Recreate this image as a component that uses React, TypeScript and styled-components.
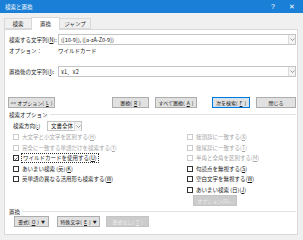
import styled, { createGlobalStyle } from "styled-components";

const GlobalStyle = createGlobalStyle`
  html, body { margin:0; padding:0; }
  body {
    width:303px;
    height:240px;
    overflow:hidden;
    background:#f0f0f0;
    font-family:"Noto Sans CJK JP","Noto Sans",sans-serif;
    font-size:5.5px;
    color:#1a1a1a;
  }
  u { text-decoration:underline; text-underline-offset:1px; text-decoration-thickness:0.5px; }
`;

const Window = styled.div`
  width:303px;
  height:240px;
  display:flex;
  flex-direction:column;
  background:#f0f0f0;
`;

const TitleBar = styled.div`
  height:13px;
  background:#1a7fd6;
  color:#fff;
  display:flex;
  align-items:center;
  padding:0 8px 0 5px;
  font-size:5.5px;
`;

const Title = styled.span`
  flex:1;
`;

const TitleIcon = styled.span`
  font-family:"Liberation Sans",sans-serif;
  font-size:7px;
  margin-left:14px;
`;

const Tabs = styled.div`
  display:flex;
  align-items:flex-end;
  height:13px;
  margin:3px 0 0 5px;
  position:relative;
  z-index:1;
`;

const Tab = styled.div<{ $active?: boolean; $w: number }>`
  width:${p => p.$w}px;
  height:${p => (p.$active ? 13 : 11)}px;
  box-sizing:border-box;
  display:flex;
  align-items:center;
  justify-content:center;
  border:1px solid #d9d9d9;
  border-bottom:${p => (p.$active ? "none" : "1px solid #d9d9d9")};
  background:${p => (p.$active ? "#fff" : "#f0f0f0")};
  margin-bottom:${p => (p.$active ? "-1px" : "0")};
  margin-left:-1px;
`;

const Panel = styled.div`
  margin-left:4px;
  width:294px;
  height:206px;
  box-sizing:border-box;
  border:1px solid #d9d9d9;
  background:#fff;
  padding:3px 1px 0 4px;
  display:flex;
  flex-direction:column;
`;

const FieldRow = styled.div<{ $mt: number }>`
  display:grid;
  grid-template-columns:49px 1fr;
  align-items:center;
  margin-top:${p => p.$mt}px;
`;

const ComboBox = styled.div`
  height:11px;
  box-sizing:border-box;
  border:1px solid #c4c4c4;
  display:flex;
  align-items:center;
  padding-left:2px;
  background:#fff;
`;

const ComboText = styled.span`
  flex:1;
  white-space:nowrap;
`;

const ArrowBox = styled.span`
  width:7px;
  height:9px;
  box-sizing:border-box;
  border-left:1px solid #dcdcdc;
  background:#f3f3f3;
  display:flex;
  align-items:center;
  justify-content:center;
`;

const InfoRow = styled.div`
  display:grid;
  grid-template-columns:49px 1fr;
  height:7px;
  align-items:center;
  margin-top:2px;
`;

const ButtonRow = styled.div<{ $mt: number; $ml?: number }>`
  display:flex;
  margin-top:${p => p.$mt}px;
  margin-left:${p => p.$ml ?? 0}px;
`;

const Button = styled.div<{ $w: number; $ml?: number; $focus?: boolean; $disabled?: boolean }>`
  width:${p => p.$w}px;
  height:11px;
  box-sizing:border-box;
  margin-left:${p => p.$ml ?? 0}px;
  display:flex;
  align-items:center;
  justify-content:center;
  gap:2px;
  white-space:nowrap;
  font-size:5px;
  background:${p => (p.$disabled ? "#cccccc" : "#e1e1e1")};
  border:1px solid ${p => (p.$focus ? "#0078d7" : p.$disabled ? "#c4c4c4" : "#adadad")};
  box-shadow:${p => (p.$focus ? "inset 0 0 0 1px #cce4f7" : "none")};
  color:${p => (p.$disabled ? "#efefef" : "#1a1a1a")};
`;

const GroupHeader = styled.div<{ $mt: number }>`
  display:flex;
  align-items:center;
  height:7px;
  margin-top:${p => p.$mt}px;
  &::after {
    content:"";
    flex:1;
    height:1px;
    background:#e3e3e3;
    margin-left:2px;
  }
`;

const DirectionRow = styled.div`
  display:flex;
  align-items:center;
  margin:3px 0 0 4px;
  height:10px;
`;

const DirectionLabel = styled.span`
  width:34px;
`;

const Select = styled.div`
  width:35px;
  height:10px;
  box-sizing:border-box;
  border:1px solid #c4c4c4;
  display:flex;
  align-items:center;
  padding-left:3px;
`;

const Options = styled.div`
  display:flex;
  margin:1px 0 0 4px;
`;

const Column = styled.div<{ $w?: number }>`
  width:${p => (p.$w ? `${p.$w}px` : "auto")};
  display:flex;
  flex-direction:column;
`;

const CheckRow = styled.div<{ $disabled?: boolean }>`
  height:10.5px;
  display:flex;
  align-items:center;
  gap:3px;
  white-space:nowrap;
  color:${p => (p.$disabled ? "#a6a6a6" : "#1a1a1a")};
`;

const Box = styled.span<{ $disabled?: boolean }>`
  width:6px;
  height:6px;
  box-sizing:border-box;
  border:1px solid ${p => (p.$disabled ? "#cccccc" : "#333")};
  background:#fff;
  display:flex;
  align-items:center;
  justify-content:center;
`;

const Focus = styled.span`
  outline:1px dotted #333;
  outline-offset:0;
  padding:0 1px;
`;

const Caret = styled.span`
  font-size:4px;
`;

const Chevron = () => (
  <svg width="5" height="3" viewBox="0 0 5 3">
    <polyline points="0.5,0.5 2.5,2.5 4.5,0.5" fill="none" stroke="#777" strokeWidth="0.7" />
  </svg>
);

const Tick = () => (
  <svg width="5" height="5" viewBox="0 0 5 5">
    <polyline points="0.8,2.6 2,3.8 4.2,1.2" fill="none" stroke="#222" strokeWidth="0.8" />
  </svg>
);

interface CheckProps {
  label: string;
  acc: string;
  disabled?: boolean;
  checked?: boolean;
  focus?: boolean;
}

function Check({ label, acc, disabled, checked, focus }: CheckProps) {
  const text = (
    <>
      {label}(<u>{acc}</u>)
    </>
  );
  return (
    <CheckRow $disabled={disabled}>
      <Box $disabled={disabled}>{checked && <Tick />}</Box>
      {focus ? <Focus>{text}</Focus> : <span>{text}</span>}
    </CheckRow>
  );
}

function App() {
  return (
    <Window>
      <GlobalStyle />
      <TitleBar>
        <Title>検索と置換</Title>
        <TitleIcon>?</TitleIcon>
        <TitleIcon>✕</TitleIcon>
      </TitleBar>
      <Tabs>
        <Tab $w={28}>検索</Tab>
        <Tab $w={29} $active>置換</Tab>
        <Tab $w={32}>ジャンプ</Tab>
      </Tabs>
      <Panel>
        <FieldRow $mt={1}>
          <span>検索する文字列(<u>N</u>):</span>
          <ComboBox>
            <ComboText>([10-9]), ([a-zA-Z0-9])</ComboText>
            <ArrowBox><Chevron /></ArrowBox>
          </ComboBox>
        </FieldRow>
        <InfoRow>
          <span>オプション：</span>
          <span>ワイルドカード</span>
        </InfoRow>
        <FieldRow $mt={12}>
          <span>置換後の文字列(<u>I</u>):</span>
          <ComboBox>
            <ComboText>¥1、¥2</ComboText>
            <ArrowBox><Chevron /></ArrowBox>
          </ComboBox>
        </FieldRow>
        <ButtonRow $mt={20} $ml={-1}>
          <Button $w={47}>&lt;&lt; オプション(<u>L</u>)</Button>
          <Button $w={37} $ml={57}>置換(<u>R</u>)</Button>
          <Button $w={42} $ml={6}>すべて置換(<u>A</u>)</Button>
          <Button $w={38} $ml={15} $focus>次を検索(<u>F</u>)</Button>
          <Button $w={40} $ml={6}>閉じる</Button>
        </ButtonRow>
        <GroupHeader $mt={3}>検索オプション</GroupHeader>
        <DirectionRow>
          <DirectionLabel>検索方向(<u>:</u>)</DirectionLabel>
          <Select>
            <ComboText>文書全体</ComboText>
            <ArrowBox><Chevron /></ArrowBox>
          </Select>
        </DirectionRow>
        <Options>
          <Column $w={174}>
            <Check label="大文字と小文字を区別する" acc="H" disabled />
            <Check label="完全に一致する単語だけを検索する" acc="Y" disabled />
            <Check label="ワイルドカードを使用する" acc="U" checked focus />
            <Check label="あいまい検索 (英)" acc="K" />
            <Check label="英単語の異なる活用形も検索する" acc="W" />
          </Column>
          <Column>
            <Check label="接頭辞に一致する" acc="X" disabled />
            <Check label="接尾辞に一致する" acc="T" disabled />
            <Check label="半角と全角を区別する" acc="M" disabled />
            <Check label="句読点を無視する" acc="S" />
            <Check label="空白文字を無視する" acc="W" />
            <Check label="あいまい検索 (日)" acc="J" />
            <ButtonRow $mt={0} $ml={6}>
              <Button $w={44} $disabled>オプション(S)...</Button>
            </ButtonRow>
          </Column>
        </Options>
        <GroupHeader $mt={2}>置換</GroupHeader>
        <ButtonRow $mt={1} $ml={5}>
          <Button $w={35}>書式(<u>O</u>)<Caret>▼</Caret></Button>
          <Button $w={43} $ml={8}>特殊文字(<u>E</u>)<Caret>▼</Caret></Button>
          <Button $w={43} $ml={6} $disabled>書式なし(<u>T</u>)</Button>
        </ButtonRow>
      </Panel>
    </Window>
  );
}

export default App;
